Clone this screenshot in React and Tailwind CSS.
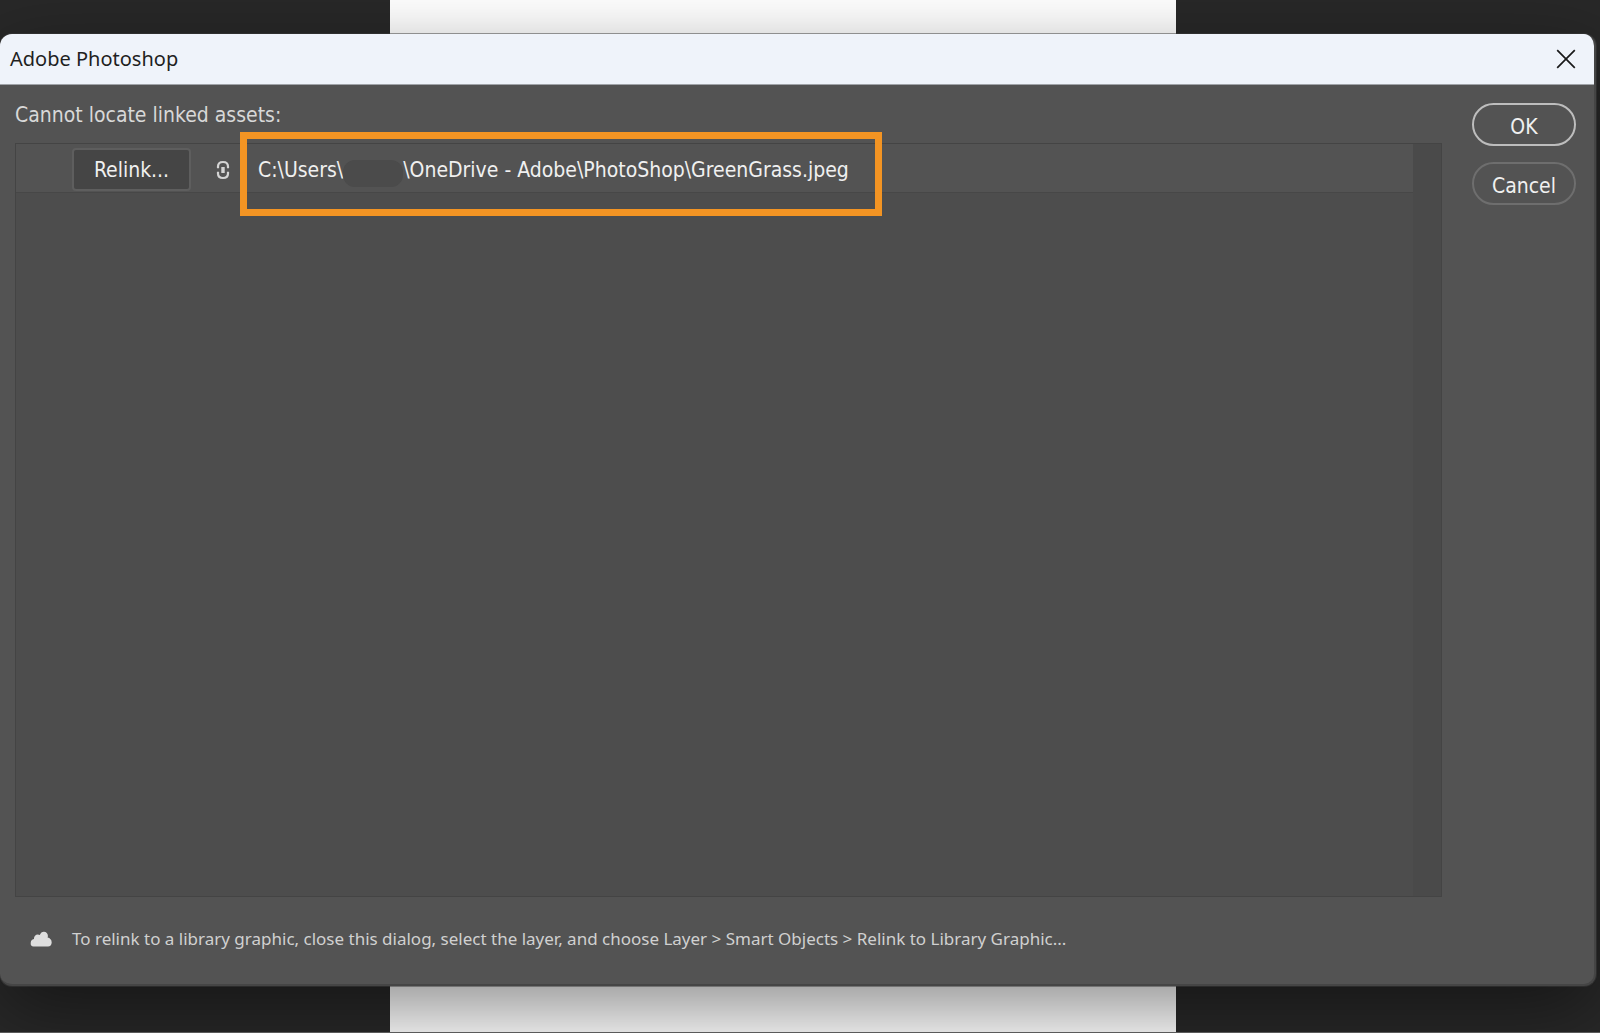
const assets = [
    { id: 1, root: 'C:\\Users\\', path: '\\OneDrive - Adobe\\PhotoShop\\GreenGrass.jpeg' },
];

function CloseIcon() {
    return (
        <svg viewBox="0 0 20 20" className="w-5 h-5" fill="none" stroke="#1a1a1a" strokeWidth="1.7">
            <path d="M1.2 1.2 18.8 18.8M18.8 1.2 1.2 18.8" />
        </svg>
    );
}

function LinkIcon() {
    return (
        <svg viewBox="0 0 14 20" className="w-[14px] h-5 shrink-0" fill="none" stroke="#d4d4d4" strokeWidth="2.2">
            <path d="M2 8.2V6.5C2 3.6 4 2 7 2s5 1.6 5 4.5v1.7" />
            <path d="M2 11.8v1.7C2 16.4 4 18 7 18s5-1.6 5-4.5v-1.7" />
            <path d="M7 7v6" strokeWidth="3.4" />
        </svg>
    );
}

function CloudIcon() {
    return (
        <svg viewBox="0 0 22 16" className="w-[22px] h-4 shrink-0" fill="#dedede">
            <path d="M3.5 15.5A3.2 3.2 0 0 1 .7 12c0-2 1.3-3.5 3.2-3.9C4 5.3 5.6 3.6 7.800 3.600c.8 0 1.400.2 2 .5C10.500 2 12 .8 13.900.8c2.400 0 4 1.700 4 4 0 .7-.1 1.200-.3 1.800 2.400.5 4.100 2.400 4.100 4.800 0 2.300-1.500 4.100-3.700 4.100Z" />
        </svg>
    );
}

function AssetRow({ asset }) {
    return (
        <li className="flex items-center h-[49px] pt-[3px] bg-[#535353] border-b border-[#474747]">
            <button className="ml-14 w-[119px] h-[43px] shrink-0 bg-[#454545] border-2 border-[#5e5e5e] rounded text-[#f0f0f0]">
                Relink...
            </button>
            <span className="ml-[25px] flex">
                <LinkIcon />
            </span>
            <div className="relative ml-[10px] w-[642px] h-10 flex items-center pl-[18px] whitespace-pre text-[#f0f0f0]">
                <span>{asset.root}</span>
                <span className="w-[60px] h-[27px] mt-2 rounded-xl bg-[#4b4b4b]" />
                <span>{asset.path}</span>
                {/* highlight around the missing path */}
                <span className="absolute inset-x-0 -top-[18px] -bottom-[26px] border-[7px] border-[#f39423]" />
            </div>
        </li>
    );
}

export default function App() {
    return (
        <div className="min-h-screen grid bg-[#282828] border-b border-[#5a5a5a] overflow-hidden">
            <div className="[grid-area:1/1] ml-[390px] w-[786px] bg-white" />
            <div
                role="dialog"
                aria-labelledby="dialog-title"
                className="[grid-area:1/1] mt-[34px] mb-[46px] mr-1 flex flex-col bg-[#535353] border-r-2 border-b-2 border-[#454545] rounded-xl overflow-hidden shadow-[0_0_0_1px_rgba(60,60,60,0.5),0_24px_74px_rgba(0,0,0,0.45)] font-['DejaVu_Sans_Condensed','DejaVu_Sans',sans-serif] text-[21px] leading-7"
            >
                <header className="flex items-center justify-between h-[51px] pl-[10px] pr-[18px] bg-[#eff3fa] border-b border-[#a0a3a8]">
                    <h1 id="dialog-title" className="font-['Noto_Sans',sans-serif] text-xl text-[#1f1f1f]">
                        Adobe Photoshop
                    </h1>
                    <button aria-label="Close">
                        <CloseIcon />
                    </button>
                </header>

                <div className="flex-1 flex pl-[15px] pr-[18px]">
                    <main className="flex-1 flex flex-col">
                        <p className="mt-4 mb-[14px] text-[#d8d8d8]">Cannot locate linked assets:</p>
                        <div className="flex-1 flex bg-[#4d4d4d] border border-[#444444]">
                            <ul className="flex-1">
                                {assets.map((asset) => (
                                    <AssetRow key={asset.id} asset={asset} />
                                ))}
                            </ul>
                            <div className="w-7 bg-[#4a4a4a]" />
                        </div>
                    </main>
                    <aside className="ml-[30px] mt-[18px] w-[104px] flex flex-col gap-4 text-[#f0f0f0]">
                        <button className="h-[43px] pt-1 border-2 border-[#bdbdbd] rounded-full">OK</button>
                        <button className="h-[43px] pt-1 border-2 border-[#6e6e6e] rounded-full">Cancel</button>
                    </aside>
                </div>

                <footer className="flex items-center h-[87px] pb-[3px] pl-[30px] gap-5 font-['Noto_Sans',sans-serif] text-[17px] text-[#d0d0d0]">
                    <CloudIcon />
                    <p>To relink to a library graphic, close this dialog, select the layer, and choose Layer &gt; Smart Objects &gt; Relink to Library Graphic...</p>
                </footer>
            </div>
        </div>
    );
}
